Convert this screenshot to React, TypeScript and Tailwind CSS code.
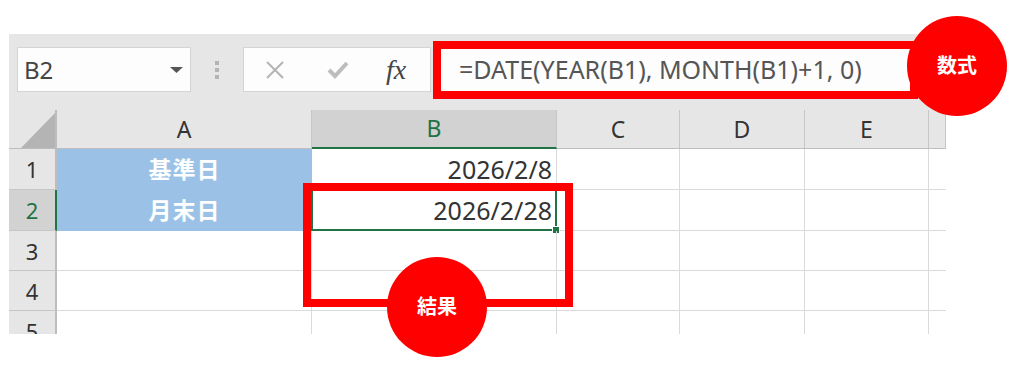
import React from "react";

// Excel-style sheet snippet with two red annotations (数式 / 結果).

const font = "font-['Noto_Sans','Noto_Sans_CJK_JP',sans-serif]";

const cols = ["A", "B", "C", "D", "E", ""];
const rows = [1, 2, 3, 4, 5];

function HeaderRow() {
  return (
    <>
      <div className="relative bg-[#e6e6e6] border-r-2 border-b border-[#bdbdbd]">
        <svg className="absolute left-[12px] top-[3px]" width="34" height="35" viewBox="0 0 34 35">
          <polygon points="34,0 34,35 0,35" fill="#b4b4b4" />
        </svg>
      </div>
      {cols.map((c) =>
        c === "B" ? (
          <div
            key={c}
            className="flex items-center justify-center bg-[#d2d2d2] border-r border-r-[#c6c6c6] border-b-2 border-b-[#217346] text-[23px] text-[#217346]"
          >
            {c}
          </div>
        ) : (
          <div
            key={c || "x"}
            className="flex items-center justify-center bg-[#e6e6e6] border-r border-b border-r-[#c6c6c6] border-b-[#bdbdbd] text-[23px] text-[#333]"
          >
            {c}
          </div>
        )
      )}
    </>
  );
}

function Row({ n }: { n: number }) {
  const sel = n === 2;
  const last = n === 5;
  const label = n === 1 ? "基準日" : n === 2 ? "月末日" : "";
  const value = n === 1 ? "2026/2/8" : n === 2 ? "2026/2/28" : "";
  return (
    <>
      <div
        className={
          sel
            ? "flex items-center justify-center bg-[#d2d2d2] border-b border-b-[#c6c6c6] border-r-2 border-r-[#217346] text-[22px] text-[#217346]"
            : last
            ? "flex items-start justify-center pt-[9px] bg-[#e6e6e6] border-r-2 border-r-[#bdbdbd] text-[22px] text-[#333] overflow-hidden"
            : "flex items-center justify-center bg-[#e6e6e6] border-b border-b-[#c6c6c6] border-r-2 border-r-[#bdbdbd] text-[22px] text-[#333]"
        }
      >
        {n}
      </div>
      {label ? (
        <div className="flex items-center justify-center bg-[#9bc2e6] text-white text-[23px] font-bold tracking-[1px]">
          {label}
        </div>
      ) : (
        <div className={last ? "border-r border-[#dadada]" : "border-r border-b border-[#dadada]"} />
      )}
      <div
        className={
          "relative flex items-center justify-end pr-[4px] border-r border-[#dadada] text-[25px] text-[#333] " +
          (last ? "" : "border-b")
        }
      >
        {value}
        {sel && (
          <>
            <div className="absolute left-[-1px] top-[-1px] right-[-1px] bottom-[-1px] border-2 border-[#217346]" />
            <div className="absolute right-[-3px] bottom-[-3px] w-[6px] h-[6px] bg-[#217346] outline outline-1 outline-white" />
          </>
        )}
      </div>
      <div className={last ? "border-r border-[#dadada]" : "border-r border-b border-[#dadada]"} />
      <div className={last ? "border-r border-[#dadada]" : "border-r border-b border-[#dadada]"} />
      <div className={last ? "border-r border-[#dadada]" : "border-r border-b border-[#dadada]"} />
      <div className={last ? "" : "border-b border-[#dadada]"} />
    </>
  );
}

export default function App() {
  return (
    <div className={`relative w-[1024px] h-[378px] bg-white overflow-hidden ${font}`}>
      <div className="ml-[9px] pt-[34px] w-[937px]">
        {/* formula bar */}
        <div className="flex items-start h-[76px] bg-[#e6e6e6] pt-[13px] pl-[8px]">
          <div className="flex items-center justify-between w-[174px] h-[45px] bg-[#fdfdfd] border border-[#d4d4d4] pl-[6px] pr-[7px]">
            <span className="text-[24px] text-[#444]">B2</span>
            <svg width="13" height="6" viewBox="0 0 13 6">
              <polygon points="0,0 13,0 6.5,6" fill="#555" />
            </svg>
          </div>
          <div className="flex flex-col items-center justify-center gap-[3px] w-[52px] h-[45px]">
            <span className="w-[4px] h-[4px] bg-[#b4b4b4]" />
            <span className="w-[4px] h-[4px] bg-[#b4b4b4]" />
            <span className="w-[4px] h-[4px] bg-[#b4b4b4]" />
          </div>
          <div className="flex items-center w-[188px] h-[45px] bg-[#fdfdfd] border border-[#d4d4d4]">
            <svg className="ml-[21px]" width="20" height="18" viewBox="0 0 20 18">
              <path d="M2 1 L18 17 M18 1 L2 17" stroke="#b4b4b4" strokeWidth="2" />
            </svg>
            <svg className="ml-[42px]" width="22" height="19" viewBox="0 0 22 19">
              <path d="M2 10 L8 16 L20 3" stroke="#bdbdbd" strokeWidth="4" fill="none" />
            </svg>
            <span className="ml-[37px] font-['Liberation_Serif',serif] italic text-[28px] text-[#444] leading-none">
              fx
            </span>
          </div>
          <div className="flex items-center ml-[2px] w-[483px] h-[45px] bg-[#fdfdfd] pl-[26px] text-[25px] text-[#555] whitespace-nowrap">
            =DATE(YEAR(B1), MONTH(B1)+1, 0)
          </div>
        </div>

        {/* sheet */}
        <div className="grid grid-cols-[48px_255px_245px_123px_125px_124px_17px] grid-rows-[39px_41px_41px_40px_40px_23px] leading-none">
          <HeaderRow />
          {rows.map((n) => (
            <Row key={n} n={n} />
          ))}
        </div>
      </div>

      {/* annotations */}
      <div className="absolute left-[433px] top-[41px] w-[485px] h-[58px] border-[8px] border-[#ff0000]" />
      <div className="absolute left-[907px] top-[16px] w-[100px] h-[100px] rounded-full bg-[#ff0000] flex items-center justify-center text-white text-[20px] font-bold">
        数式
      </div>
      <div className="absolute left-[303px] top-[183px] w-[270px] h-[124px] border-[8px] border-[#ff0000]" />
      <div className="absolute left-[387px] top-[257px] w-[100px] h-[100px] rounded-full bg-[#ff0000] flex items-center justify-center text-white text-[20px] font-bold">
        結果
      </div>
    </div>
  );
}
